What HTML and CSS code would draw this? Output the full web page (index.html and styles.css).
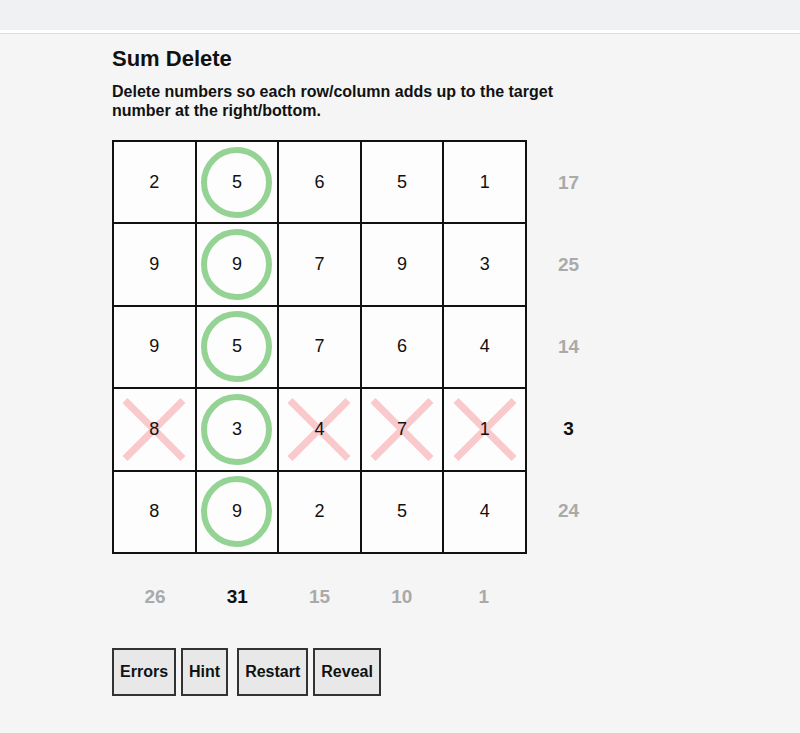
FILE: index.html
```html
<!DOCTYPE html>
<html>
<head>
<meta charset="utf-8">
<link rel="stylesheet" href="styles.css">
</head>
<body>
<div class="topbar"></div>
<main class="page">
  <h1 class="title">Sum Delete</h1>
  <p class="desc">Delete numbers so each row/column adds up to the target number at the right/bottom.</p>
  <div class="puzzle">
    <div class="board">
      <div class="cell">2</div><div class="cell keep">5</div><div class="cell">6</div><div class="cell">5</div><div class="cell">1</div>
      <div class="cell">9</div><div class="cell keep">9</div><div class="cell">7</div><div class="cell">9</div><div class="cell">3</div>
      <div class="cell">9</div><div class="cell keep">5</div><div class="cell">7</div><div class="cell">6</div><div class="cell">4</div>
      <div class="cell del">8</div><div class="cell keep">3</div><div class="cell del">4</div><div class="cell del">7</div><div class="cell del">1</div>
      <div class="cell">8</div><div class="cell keep">9</div><div class="cell">2</div><div class="cell">5</div><div class="cell">4</div>
    </div>
    <div class="rowsums">
      <div class="sum">17</div><div class="sum">25</div><div class="sum">14</div><div class="sum done">3</div><div class="sum">24</div>
    </div>
    <div class="colsums">
      <div class="sum">26</div><div class="sum done">31</div><div class="sum">15</div><div class="sum">10</div><div class="sum">1</div>
    </div>
  </div>
  <div class="buttons">
    <button class="btn">Errors</button>
    <button class="btn">Hint</button>
    <button class="btn btn-sep">Restart</button>
    <button class="btn">Reveal</button>
  </div>
</main>
</body>
</html>
```
FILE: styles.css
```css
html, body {
  margin: 0;
  padding: 0;
  background: #f5f5f5;
  font-family: "Liberation Sans", Arial, sans-serif;
  color: #111;
}
.topbar {
  height: 30px;
  background: #f0f1f2;
  border-bottom: 3px solid #fff;
  box-shadow: 0 1px 0 #dcdcdc;
}
.page {
  padding: 0 0 0 112px;
}
.title {
  margin: 13px 0 0 0;
  font-size: 22px;
  font-weight: bold;
  line-height: 26px;
}
.desc {
  margin: 10px 0 0 0;
  width: 470px;
  font-size: 16px;
  font-weight: bold;
  line-height: 19px;
}
.puzzle {
  margin-top: 20px;
  display: grid;
  grid-template-columns: 415px 83px;
  grid-template-rows: 414px 86px;
}
.board {
  display: grid;
  grid-template-columns: repeat(5, 1fr);
  grid-template-rows: repeat(5, 1fr);
  gap: 2px;
  padding: 2px;
  background: #111;
}
.cell {
  background: #fdfdfd;
  display: flex;
  align-items: center;
  justify-content: center;
  font-size: 18px;
  position: relative;
  z-index: 0;
}
.cell.keep::before {
  content: "";
  position: absolute;
  left: 50%;
  top: 50%;
  width: 59px;
  height: 59px;
  margin: -35.5px 0 0 -35.5px;
  border: 6px solid #94d394;
  border-radius: 50%;
  z-index: -1;
}
.cell.del::before,
.cell.del::after {
  content: "";
  position: absolute;
  left: 50%;
  top: 50%;
  width: 82px;
  height: 7px;
  margin: -3.5px 0 0 -41px;
  background: #f9c9cc;
  transform: rotate(45deg);
  z-index: -1;
}
.cell.del::after {
  transform: rotate(-45deg);
}
.rowsums {
  display: grid;
  grid-template-rows: repeat(5, 1fr);
  padding: 2px 0;
}
.colsums {
  display: grid;
  grid-template-columns: repeat(5, 1fr);
  padding: 0 2px;
}
.sum {
  display: flex;
  align-items: center;
  justify-content: center;
  font-size: 19px;
  font-weight: bold;
  color: #aaaaaa;
}
.sum.done {
  color: #111;
}
.buttons {
  margin-top: 8px;
  display: flex;
  gap: 5px;
}
.btn {
  font-family: "Liberation Sans", Arial, sans-serif;
  font-size: 16px;
  font-weight: bold;
  color: #111;
  background: #e8e8e8;
  border: 2px solid #333;
  border-radius: 0;
  height: 48px;
  padding: 0 6px;
}
.btn-sep {
  margin-left: 4px;
}
```
